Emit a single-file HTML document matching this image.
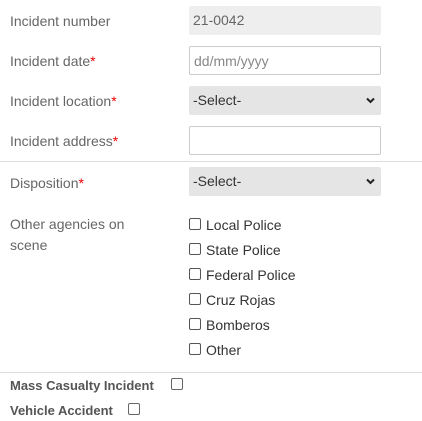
<!DOCTYPE html><html><head><style>
body{margin:0;background:#fff;font-family:"Liberation Sans",sans-serif;font-size:14px;color:#666;width:422px;height:421px;position:relative;overflow:hidden}
.a{position:absolute}
.l{left:10px}
.r{color:#e00}
.box{position:absolute;left:189px;width:192px;height:29px;border-radius:2px;box-sizing:border-box;padding-left:4px;line-height:29px}
.in{border:1px solid #ccc;background:#fff;color:#888}
.sel{background:#e5e5e5;color:#333}
.cb{position:absolute;left:189px;width:10px;height:10px;border:1px solid #555;border-radius:2px;background:#fff}
.ct{position:absolute;left:206px;color:#333}
.hr{position:absolute;left:0;width:422px;height:1px;background:#ddd}
.b{font-weight:bold;color:#555;font-size:13px}
svg{position:absolute;right:6px;top:11px}
</style></head><body>
<div class="a l" style="top:13px">Incident number</div>
<div class="box" style="top:6px;background:#eee;color:#666">21-0042</div>
<div class="a l" style="top:53px">Incident date<span class="r">*</span></div>
<div class="box in" style="top:46px">dd/mm/yyyy</div>
<div class="a l" style="top:93px">Incident location<span class="r">*</span></div>
<div class="box sel" style="top:86px">-Select-<svg width="9" height="7" viewBox="0 0 9 7"><path d="M1 1.5L4.5 5 8 1.5" stroke="#222" stroke-width="2" fill="none"/></svg></div>
<div class="a l" style="top:133px">Incident address<span class="r">*</span></div>
<div class="box in" style="top:126px"></div>
<div class="hr" style="top:161px"></div>
<div class="a l" style="top:175px">Disposition<span class="r">*</span></div>
<div class="box sel" style="top:167px">-Select-<svg width="9" height="7" viewBox="0 0 9 7"><path d="M1 1.5L4.5 5 8 1.5" stroke="#222" stroke-width="2" fill="none"/></svg></div>
<div class="a l" style="top:214px;line-height:21px">Other agencies on<br>scene</div>
<div class="cb" style="top:218px"></div><div class="ct" style="top:217px">Local Police</div>
<div class="cb" style="top:243px"></div><div class="ct" style="top:242px">State Police</div>
<div class="cb" style="top:268px"></div><div class="ct" style="top:267px">Federal Police</div>
<div class="cb" style="top:293px"></div><div class="ct" style="top:292px">Cruz Rojas</div>
<div class="cb" style="top:318px"></div><div class="ct" style="top:317px">Bomberos</div>
<div class="cb" style="top:343px"></div><div class="ct" style="top:342px">Other</div>
<div class="hr" style="top:372px"></div>
<div class="a l b" style="top:378px">Mass Casualty Incident</div>
<div class="cb" style="left:171px;top:378px;border-color:#666"></div>
<div class="a l b" style="top:403px">Vehicle Accident</div>
<div class="cb" style="left:128px;top:403px;border-color:#666"></div>
</body></html>
